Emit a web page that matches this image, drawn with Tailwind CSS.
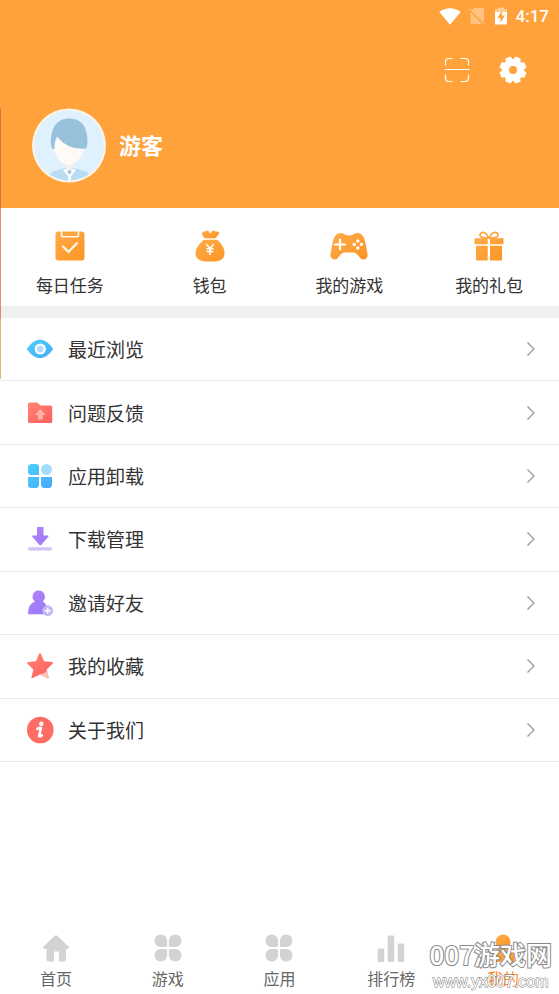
<!DOCTYPE html>
<html lang="zh-CN">
<head>
<meta charset="utf-8">
<meta name="viewport" content="width=device-width, initial-scale=1">
<title>我的</title>
<script src="https://cdn.jsdelivr.net/npm/@tailwindcss/browser@4"></script>
</head>
<body class="relative flex min-h-screen flex-col bg-white font-['Noto_Sans_CJK_SC',sans-serif] text-[#333]">
<svg class="absolute h-0 w-0" aria-hidden="true">
  <defs>
    <linearGradient id="orange" x1="0" y1="0" x2="1" y2="1"><stop offset="0" stop-color="#ffab4a"/><stop offset="1" stop-color="#fd9524"/></linearGradient>
    <linearGradient id="blue" x1="0" y1="0" x2="1" y2="1"><stop offset="0" stop-color="#4cd0f8"/><stop offset="1" stop-color="#46a9fb"/></linearGradient>
    <linearGradient id="red" x1="0" y1="0" x2="1" y2="1"><stop offset="0" stop-color="#ff8672"/><stop offset="1" stop-color="#fd5d5f"/></linearGradient>
    <linearGradient id="purple" x1="0" y1="0" x2="1" y2="1"><stop offset="0" stop-color="#b681f6"/><stop offset="1" stop-color="#957bfa"/></linearGradient>
    <symbol id="chevron" viewBox="0 0 10 16"><path d="M1.500 1.500 8 8l-6.500 6.500" fill="none" stroke="#999" stroke-width="1.300"/></symbol>
    <symbol id="petals" viewBox="0 0 28 28"><path d="M6.800 .5a6.300 6.300 0 0 1 6.300 6.300V11.500q0 1.600-1.600 1.600H6.800A6.300 6.300 0 0 1 6.800 .5zM21.200 .5a6.300 6.300 0 0 1 0 12.600h-4.700q-1.600 0-1.600-1.600V6.800A6.300 6.300 0 0 1 21.200 .5zM6.800 14.900h4.700q1.600 0 1.600 1.600v4.700a6.300 6.300 0 1 1-6.300-6.300zM16.500 14.900h4.700a6.300 6.300 0 1 1-6.300 6.300v-4.700q0-1.600 1.600-1.600z" fill="#d3d3d3"/></symbol>
  </defs>
</svg>

<header class="flex h-[208px] flex-col bg-[#ffa23c] text-white">
  <div class="flex h-8 items-center justify-end pr-[10px]">
    <svg class="mr-2 h-[17px] w-[22px]" viewBox="0 0 22 17"><path d="M.3 4Q11-3.500 21.700 4L11 16.700z" fill="#fff"/></svg>
    <svg class="mr-[9px] h-[18px] w-4" viewBox="0 0 16 18"><path d="M5 1h8.500q1.500 0 1.500 1.500V15L2.500 3.500zM1.500 5 13 17H3q-1.500 0-1.500-1.500z" fill="#fff" fill-opacity=".35"/><path d="m.5 1.500 15 15.500" stroke="#fff" stroke-opacity=".45"/></svg>
    <svg class="mr-2 h-[18px] w-[14px]" viewBox="0 0 14 18"><path d="M1 2h3V.5h6V2h3v4H1z" fill="#fff" fill-opacity=".45"/><path d="M1 5h12v12.500H1z" fill="#fff"/><path d="M8 3.500 3.500 11H6.500v4.500L11 8.500H8z" fill="#ffa23c"/></svg>
    <time class="font-[Roboto,sans-serif] text-[17px] leading-8 font-medium">4:17</time>
  </div>
  <div class="mt-5 flex items-center justify-end gap-7 pr-8">
    <button aria-label="扫一扫" class="flex h-9 w-7 items-center justify-center"><svg class="h-[26px] w-[26px]" viewBox="0 0 26 26" fill="none" stroke="#fff" stroke-width="1.200"><path d="M1.500 8.500V5q0-3.500 3.500-3.500h3.500M16.500 1.500H21Q24.500 1.500 24.500 5v3.500M1.500 17.500V21q0 3.500 3.500 3.500h3.500M16.500 24.500H21q3.500 0 3.500-3.500v-3.500M.5 12.500h25"/></svg></button>
    <button aria-label="设置" class="flex h-9 w-7 items-center justify-center"><svg class="h-7 w-7" viewBox="0 0 28 28"><g fill="#fff"><circle cx="14" cy="14" r="10.800"/><g id="t"><path id="tooth" d="M10 5 11 1.300q.2-.8 1-.8h4q.8 0 1 .8L18 5z" transform="rotate(22.500 14 14)"/><use href="#tooth" transform="rotate(45 14 14)"/></g><use href="#t" transform="rotate(90 14 14)"/><use href="#t" transform="rotate(180 14 14)"/><use href="#t" transform="rotate(270 14 14)"/></g><circle cx="14" cy="14" r="4" fill="#ffa23c"/></svg></button>
  </div>
  <div class="mt-5 flex items-center gap-3 pl-8">
    <svg class="h-[75px] w-[75px]" viewBox="0 0 75 75" role="img" aria-label="头像">
      <clipPath id="face"><circle cx="37" cy="37.500" r="35"/></clipPath>
      <circle cx="37" cy="37.500" r="37" fill="#fbf4e8"/><circle cx="37" cy="37.500" r="35" fill="#e0f1fe"/>
      <g clip-path="url(#face)">
        <path d="M15 75q1-10 8-12l10-3h9l10 3q8 2 9 12z" fill="#b9dcf5"/>
        <path d="M34 54h7v9h-7z" fill="#f7f0ea"/>
        <path d="M21 40q3.500 10 9 14.500 7 5 13 .5 7-5.500 9.500-15L50 30 27 26z" fill="#fffaf5"/>
        <path d="m31 62 2-1 4.500 2.500L42 61l2 1-5 6v7h-3v-7z" fill="#fff"/>
        <path d="m35.500 63 2-1 2 1-1 3h-2z" fill="#9bc7e4"/>
        <path d="M20.500 41q-3-5-1-14Q22 10.500 37.500 10.500q18 0 18 24 0 3-1.500 6-18 2-29-12-3 5-2.500 12.500z" fill="#98c1dc"/>
      </g>
    </svg>
    <h1 class="pb-1 text-[22px] leading-8 font-bold">游客</h1>
  </div>
</header>

<nav aria-label="快捷入口" class="grid grid-cols-4 text-[17px] leading-6">
  <a href="#tasks" class="flex h-[98px] flex-col items-center pt-[22px]">
    <svg class="h-8 w-8" viewBox="0 0 32 32"><rect x="1.500" y="1.500" width="29" height="29" rx="3" fill="url(#orange)"/><path d="M7.500 1v4q0 1.800 2 1.800h13q2 0 2-1.800V1" fill="none" stroke="#fff6e8" stroke-width="1.600"/><path d="m8.500 16 6 6 9-9.500" fill="none" stroke="#fff9ef" stroke-width="2.200"/></svg>
    <span class="mt-[11px]">每日任务</span></a>
  <a href="#wallet" class="flex h-[98px] flex-col items-center pt-[22px]">
    <svg class="h-8 w-8" viewBox="0 0 32 32"><path d="M10.800 8.300Q8.800 6 8 4.200 7.800 1.800 10 1.500L14 .5l2.500 3 2-3 3.500 1Q26 1 25 4L21.500 8.300z" fill="url(#orange)"/><path d="M10 9.700h13c4 3 7.500 8.500 7.500 13.300q0 8-9 8.500H11Q1.500 31 1.500 23C1.500 18 6 12.700 10 9.700z" fill="url(#orange)"/><path d="m12.200 14 3.800 4.500 3.800-4.500M12.500 18.700h7M12.500 21.500h7M16 18.500V25" fill="none" stroke="#fff" stroke-width="1.500"/></svg>
    <span class="mt-[11px]">钱包</span></a>
  <a href="#games" class="flex h-[98px] flex-col items-center pt-[22px]">
    <svg class="h-8 w-10" viewBox="0 0 40 32"><path d="M9 3.500q4-1.500 7 1 1.500 1 4 1t4-1q3-2.500 7-1 4 1.500 5.500 9.500l2 11q.5 5-3.500 5.500-3 .5-5-3-2.500-3.500-5-4h-10q-2.500.5-5 4-2 3.500-5 3-4-.5-3.500-5.500l2-11Q5 5 9 3.500z" fill="url(#orange)"/><path d="M11 9.500v10M6 14.500h10" stroke="#fff" stroke-width="2.200" stroke-linecap="round"/><g fill="#fff"><circle cx="28.800" cy="11" r="1.700"/><circle cx="28.800" cy="18" r="1.700"/><circle cx="25.200" cy="14.500" r="1.700"/><circle cx="32.400" cy="14.500" r="1.700"/></g></svg>
    <span class="mt-[11px]">我的游戏</span></a>
  <a href="#gifts" class="flex h-[98px] flex-col items-center pt-[22px]">
    <svg class="h-8 w-8" viewBox="0 0 32 32"><path d="M15.500 8C8 8 6.500 6.500 7 4.500 8 1 13.500 1.500 15.500 8zM16.500 8c7.500 0 9-1.500 8.500-3.500-1-3.500-6.500-3-8.500 3.500z" fill="none" stroke="#fba23a" stroke-width="1.700"/><path d="M1.500 8.200h13.200v6H1.500zM17 8.200h13.500v6H17zM3 15.700h11.700v14.800H4q-1 0-1-1zM17 15.700h12v13.800q0 1-1 1H17z" fill="url(#orange)"/></svg>
    <span class="mt-[11px]">我的礼包</span></a>
</nav>
<div class="h-3 bg-[#efefef]"></div>

<main class="grow">
  <ul class="flex min-h-[444px] flex-col text-[19px] leading-7 *:flex *:grow *:border-b *:border-[#ebebeb]">
    <li><a href="#recent" class="flex grow items-center pr-[23px] pl-[26px]"><svg class="mr-[14px] h-7 w-7" viewBox="0 0 28 28"><path d="M.8 14Q7 4.800 14 4.800T27.200 14Q21 23.200 14 23.200T.8 14z" fill="url(#blue)"/><circle cx="14.300" cy="14" r="4.400" fill="#aeddfc" stroke="#fff" stroke-width="2.400"/></svg><span class="grow">最近浏览</span><svg class="h-4 w-[10px]"><use href="#chevron"/></svg></a></li>
    <li><a href="#feedback" class="flex grow items-center pr-[23px] pl-[26px]"><svg class="mr-[14px] h-7 w-7" viewBox="0 0 28 28"><path d="M2 5q0-1.500 1.500-1.500h8l3 3h10q1.700 0 1.700 1.500v14.500q0 1.500-1.700 1.500H3.500Q2 24 2 22.500z" fill="url(#red)"/><path d="m14.300 10 5.500 6h-3v4.500h-5V16h-3z" fill="#ffb1a7"/></svg><span class="grow">问题反馈</span><svg class="h-4 w-[10px]"><use href="#chevron"/></svg></a></li>
    <li><a href="#uninstall" class="flex grow items-center pr-[23px] pl-[26px]"><svg class="mr-[14px] h-7 w-7" viewBox="0 0 28 28"><path d="M5.500 2H10q3 0 3 3v8H5.500Q2 13 2 9.500v-4Q2 2 5.500 2zM2 15h11v7.500q0 3.500-3.500 3.500h-4Q2 26 2 22.500zM15 15h11v7.500q0 3.500-3.500 3.500h-4Q15 26 15 22.500z" fill="url(#blue)"/><circle cx="20.500" cy="7.500" r="5.500" fill="#a4dcfd"/></svg><span class="grow">应用卸载</span><svg class="h-4 w-[10px]"><use href="#chevron"/></svg></a></li>
    <li><a href="#downloads" class="flex grow items-center pr-[23px] pl-[26px]"><svg class="mr-[14px] h-7 w-7" viewBox="0 0 28 28"><path d="M11 2h6.500v8.500h4.300q1.400 0 .5 1.200l-7 8q-1 1-2 0l-7-8q-1-1.200.5-1.200H11z" fill="url(#purple)"/><rect x="2.300" y="22.300" width="23.500" height="3.200" rx="1" fill="#d2c2f7"/></svg><span class="grow">下载管理</span><svg class="h-4 w-[10px]"><use href="#chevron"/></svg></a></li>
    <li><a href="#invite" class="flex grow items-center pr-[23px] pl-[26px]"><svg class="mr-[14px] h-7 w-7" viewBox="0 0 28 28"><path d="M12.800 1.500a6.200 6.200 0 0 1 4 10.800q2.500 1.500 4 5.200l-3 7.800H3q-1 0-1-1.200 0-8.600 7-11.500A6.200 6.200 0 0 1 12.800 1.500z" fill="url(#purple)"/><circle cx="21.700" cy="21.700" r="5.400" fill="#c9b6f8"/><path d="M21.700 18.800v5.800M18.800 21.700h5.800" stroke="#fff" stroke-width="1.500"/></svg><span class="grow">邀请好友</span><svg class="h-4 w-[10px]"><use href="#chevron"/></svg></a></li>
    <li><a href="#favorites" class="flex grow items-center pr-[23px] pl-[26px]"><svg class="mr-[14px] h-7 w-7" viewBox="0 0 28 28"><path d="M13.100 1.800q.9-1.500 1.800 0L18 9.200l8 .9q1.700.4.500 1.700l-5.800 5.700 1.800 7.700q.2 1.700-1.300.9L14 22.500l-7.200 3.600q-1.500.8-1.300-.9l1.800-7.700-5.800-5.700Q.3 10.500 2 10.100l8-.9z" fill="url(#red)"/><path d="M21 18.700 22.500 25.200q.2 1.700-1.300.9L14 22.500q4.500-.8 7-3.800z" fill="#ffc2b8"/></svg><span class="grow">我的收藏</span><svg class="h-4 w-[10px]"><use href="#chevron"/></svg></a></li>
    <li><a href="#about" class="flex grow items-center pr-[23px] pl-[26px]"><svg class="mr-[14px] h-7 w-7" viewBox="0 0 28 28"><circle cx="14.300" cy="14" r="13.300" fill="#ff6c64"/><circle cx="15.300" cy="7.800" r="2.200" fill="#fff"/><path d="M11.300 12.900q2-1.300 3.700-1.200l-1.900 8.300q.8.800 2.600-.6" fill="none" stroke="#fff" stroke-width="2.600" stroke-linecap="round" stroke-linejoin="round"/></svg><span class="grow">关于我们</span><svg class="h-4 w-[10px]"><use href="#chevron"/></svg></a></li>
  </ul>
</main>

<nav aria-label="主导航" class="grid grid-cols-5 text-[16px] leading-6 text-[#666]">
  <a href="#home" class="flex flex-col items-center pb-[3px]"><svg class="h-7 w-7" viewBox="0 0 28 28"><path d="M12.700 1.800q1.300-1 2.600 0l11.500 11q1.200 1.700-.8 2h-2v10.500q0 2.200-2 2.200h-5V17.500h-5v10H7q-2.500 0-2.500-2.200V14.800H2q-2-.3-.8-2z" fill="#d3d3d3"/></svg><span class="mt-1 mb-px">首页</span></a>
  <a href="#game" class="flex flex-col items-center pb-[3px]"><svg class="h-7 w-7"><use href="#petals"/></svg><span class="mt-1 mb-px">游戏</span></a>
  <a href="#apps" class="flex flex-col items-center pb-[3px]"><svg class="h-7 w-7"><use href="#petals"/></svg><span class="mt-1 mb-px">应用</span></a>
  <a href="#rank" class="flex flex-col items-center pb-[3px]"><svg class="h-7 w-7" viewBox="0 0 28 28" fill="#d3d3d3"><rect x=".7" y="14.500" width="6.500" height="13.500" rx="1"/><rect x="10.700" y="1.500" width="6.500" height="26.500" rx="1"/><rect x="20.700" y="9.500" width="6.500" height="18.500" rx="1"/></svg><span class="mt-1 mb-px">排行榜</span></a>
  <a href="#me" aria-current="page" class="flex flex-col items-center pb-[3px] text-[#ff8a1c]"><svg class="h-7 w-7" viewBox="0 0 28 28"><circle cx="14" cy="8" r="7.500" fill="url(#orange)"/><path d="M9 15h10q7 3 7 9.500 0 3.500-3 3.500H5q-3 0-3-3.500Q2 18 9 15z" fill="url(#orange)"/></svg><span class="mt-1 mb-px">我的</span></a>
</nav>

<div class="pointer-events-none absolute right-[7px] bottom-0 flex flex-col items-center text-white [paint-order:stroke_fill]">
  <span class="text-[26px] leading-8 font-medium [-webkit-text-stroke:2px_#8a8a8a]">007游戏网</span>
  <span class="font-['Liberation_Sans',sans-serif] text-[16px] leading-6 [-webkit-text-stroke:1px_#777]">www.yx007.com</span>
</div>
<div class="pointer-events-none absolute top-[108px] left-0 h-[211px] w-px bg-[#e0584a]/70"></div>
<div class="pointer-events-none absolute top-[319px] left-0 h-[60px] w-px bg-[#e8b675]"></div>
</body>
</html>
